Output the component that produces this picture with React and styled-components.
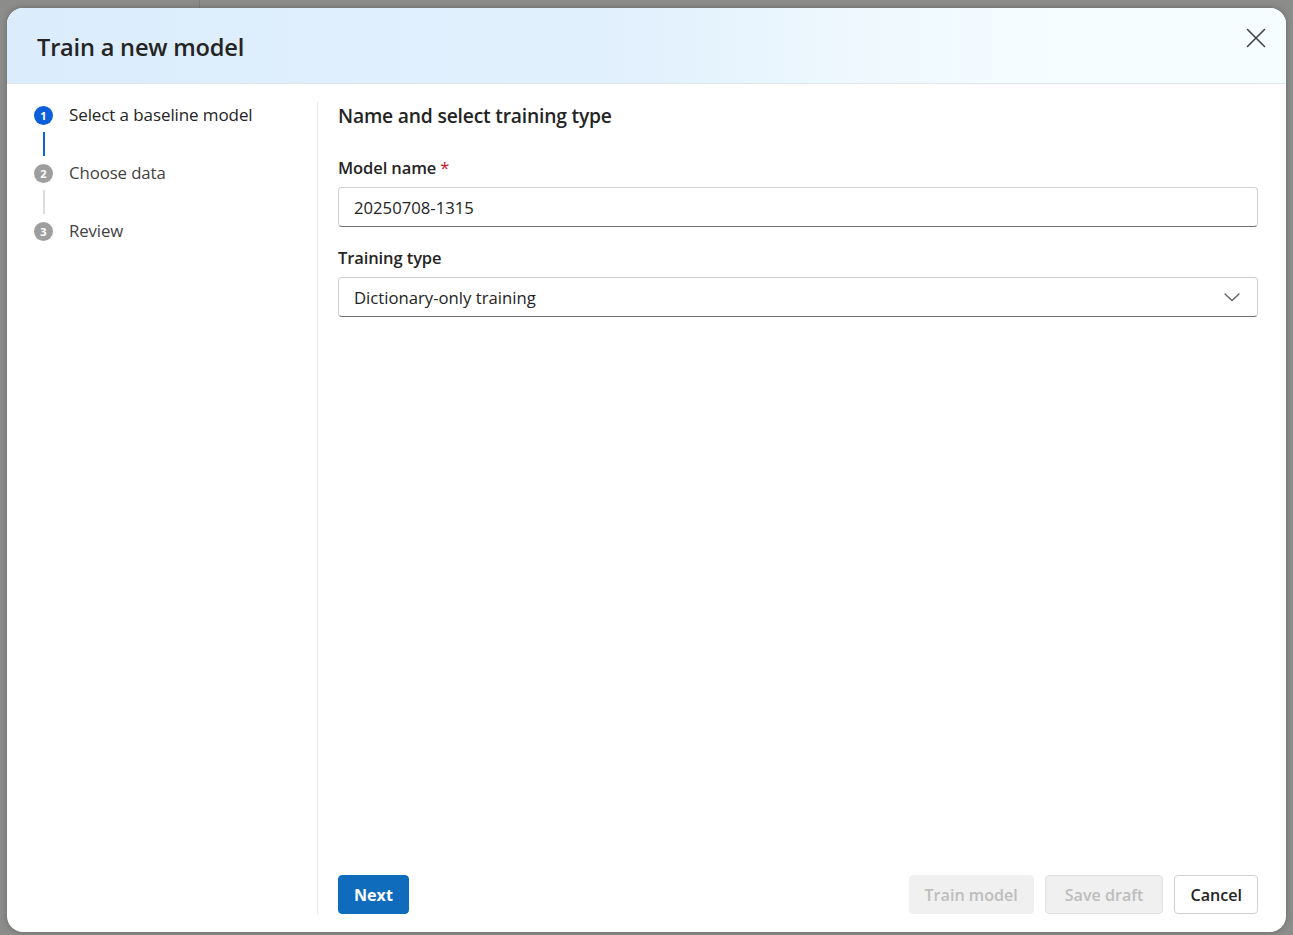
import React from "react";
import styled, { createGlobalStyle } from "styled-components";

const Global = createGlobalStyle`
  html, body { margin: 0; padding: 0; }
  body {
    font-family: "Open Sans", "Noto Sans", sans-serif;
    background: #8c8d8a;
    color: #242424;
  }
  * { box-sizing: border-box; }
`;

const Page = styled.div`
  position: relative;
  height: 935px;
  padding: 8px 7px 3px 7px;
  display: flex;
  overflow: hidden;
`;

const BackdropLine = styled.div`
  position: absolute;
  left: 0;
  top: 0;
  width: 200px;
  height: 8px;
  border-right: 1px solid #7e7f7c;
`;

const Dialog = styled.div`
  position: relative;
  flex: 1;
  display: flex;
  flex-direction: column;
  background: #ffffff;
  border-radius: 16px;
  overflow: hidden;
  box-shadow: 0 0 6px rgba(0, 0, 0, 0.25);
`;

const Header = styled.header`
  height: 76px;
  flex: none;
  display: flex;
  align-items: center;
  justify-content: space-between;
  padding: 0 15px 0 30px;
  background: linear-gradient(90deg, #dbecfc 0%, #e2f1fd 50%, #eef8fe 66%, #f4fcff 80%, #f6fdff 100%);
  border-bottom: 1px solid #e1e4e8;
`;

const Title = styled.h1`
  margin: 2px 0 0 0;
  font-size: 23.6px;
  font-weight: 600;
  color: #242424;
  letter-spacing: -0.2px;
`;

const CloseButton = styled.button`
  width: 30px;
  height: 30px;
  border: none;
  background: transparent;
  padding: 0;
  display: flex;
  align-items: center;
  justify-content: center;
  margin-top: -16px;
  color: #424242;
  cursor: pointer;
`;

const Body = styled.div`
  flex: 1;
  display: flex;
  min-height: 0;
`;

const Nav = styled.nav`
  width: 311px;
  flex: none;
  margin: 18px 0 17px 0;
  border-right: 1px solid #ebebeb;
  padding: 4px 0 0 27px;
`;

const Step = styled.div`
  display: grid;
  grid-template-columns: 19px 1fr;
  column-gap: 16px;
  align-items: start;
`;

const StepMarker = styled.div`
  display: flex;
  flex-direction: column;
  align-items: center;
`;

const StepCircle = styled.div`
  width: 19px;
  height: 19px;
  border-radius: 50%;
  background: ${(p) => (p.$active ? "#0d5fd9" : "#9e9e9e")};
  color: #fff;
  font-size: 11px;
  font-weight: 700;
  display: flex;
  align-items: center;
  justify-content: center;
  line-height: 1;
`;

const Connector = styled.div`
  width: 2px;
  height: 24px;
  margin: 7px 0 8px 0;
  background: ${(p) => (p.$active ? "#0d5fd9" : "#dcdcdc")};
`;

const StepLabel = styled.div`
  font-size: ${(p) => (p.$active ? 17 : 16.8)}px;
  line-height: 19px;
  margin-top: -1px;
  font-weight: ${(p) => (p.$active ? 500 : 400)};
  color: ${(p) => (p.$active ? "#242424" : "#424242")};
  letter-spacing: -0.1px;
`;

const Content = styled.main`
  flex: 1;
  display: flex;
  flex-direction: column;
  padding: 20px 28px 18px 20px;
`;

const Heading = styled.h2`
  margin: 0;
  font-size: 19.3px;
  line-height: 24px;
  font-weight: 600;
  color: #242424;
  letter-spacing: -0.2px;
`;

const Field = styled.div`
  display: flex;
  flex-direction: column;
  margin-top: ${(p) => p.$top}px;
`;

const Label = styled.label`
  font-size: 16.5px;
  line-height: 22px;
  font-weight: 600;
  color: #242424;
  margin-bottom: 8px;
  letter-spacing: -0.1px;
`;

const Required = styled.span`
  color: #c50f1f;
  margin-left: 4px;
  font-weight: 400;
`;

const InputBox = styled.div`
  height: 40px;
  display: flex;
  align-items: center;
  justify-content: space-between;
  padding: 0 16px 0 15px;
  border: 1px solid #d1d1d1;
  border-bottom-color: #707070;
  border-radius: 4px;
  font-size: 16.7px;
  color: #242424;
  background: #fff;
`;

const Footer = styled.footer`
  margin-top: auto;
  display: flex;
  align-items: center;
  gap: 11px;
`;

const Spacer = styled.div`
  flex: 1;
`;

const Button = styled.button`
  height: 39px;
  padding: 0 ${(p) => p.$px || 15}px;
  margin-top: 1px;
  border-radius: 4px;
  font-family: inherit;
  font-size: 16.1px;
  font-weight: 600;
  border: 1px solid ${(p) =>
    p.$variant === "primary" ? "#0f6cbd" : p.$variant === "ghost" ? "#f0f0f0" : p.$variant === "disabled" ? "#e0e0e0" : "#d1d1d1"};
  background: ${(p) =>
    p.$variant === "primary" ? "#0f6cbd" : p.$variant === "ghost" || p.$variant === "disabled" ? "#f0f0f0" : "#ffffff"};
  color: ${(p) =>
    p.$variant === "primary" ? "#ffffff" : p.$variant === "ghost" || p.$variant === "disabled" ? "#bdbdbd" : "#242424"};
  ${(p) => (p.$variant === "primary" ? "font-weight: 700;" : "")}
`;

const steps = [
  { n: 1, label: "Select a baseline model", active: true },
  { n: 2, label: "Choose data" },
  { n: 3, label: "Review" },
];

export default function App() {
  return (
    <>
      <Global />
      <Page>
        <BackdropLine />
        <Dialog>
          <Header>
            <Title>Train a new model</Title>
            <CloseButton aria-label="Close">
              <svg width="20" height="20" viewBox="0 0 20 20" fill="none">
                <path d="M1.5 1.5 L18.5 18.5 M18.5 1.5 L1.5 18.5" stroke="#424242" strokeWidth="1.6" strokeLinecap="round" />
              </svg>
            </CloseButton>
          </Header>
          <Body>
            <Nav>
              {steps.map((s, i) => (
                <Step key={s.n}>
                  <StepMarker>
                    <StepCircle $active={s.active}>{s.n}</StepCircle>
                    {i < steps.length - 1 && <Connector $active={s.active} />}
                  </StepMarker>
                  <StepLabel $active={s.active}>{s.label}</StepLabel>
                </Step>
              ))}
            </Nav>
            <Content>
              <Heading>Name and select training type</Heading>
              <Field $top={29}>
                <Label>
                  Model name<Required>*</Required>
                </Label>
                <InputBox>20250708-1315</InputBox>
              </Field>
              <Field $top={20}>
                <Label>Training type</Label>
                <InputBox>
                  <span>Dictionary-only training</span>
                  <svg width="18" height="12" viewBox="0 0 18 12" fill="none">
                    <path d="M2 3 L9 9.5 L16 3" stroke="#616161" strokeWidth="1.4" strokeLinecap="round" strokeLinejoin="round" />
                  </svg>
                </InputBox>
              </Field>
              <Footer>
                <Button $variant="primary" $px={15}>Next</Button>
                <Spacer />
                <Button $variant="ghost" $px={15}>Train model</Button>
                <Button $variant="disabled" $px={19}>Save draft</Button>
                <Button $px={15}>Cancel</Button>
              </Footer>
            </Content>
          </Body>
        </Dialog>
      </Page>
    </>
  );
}
